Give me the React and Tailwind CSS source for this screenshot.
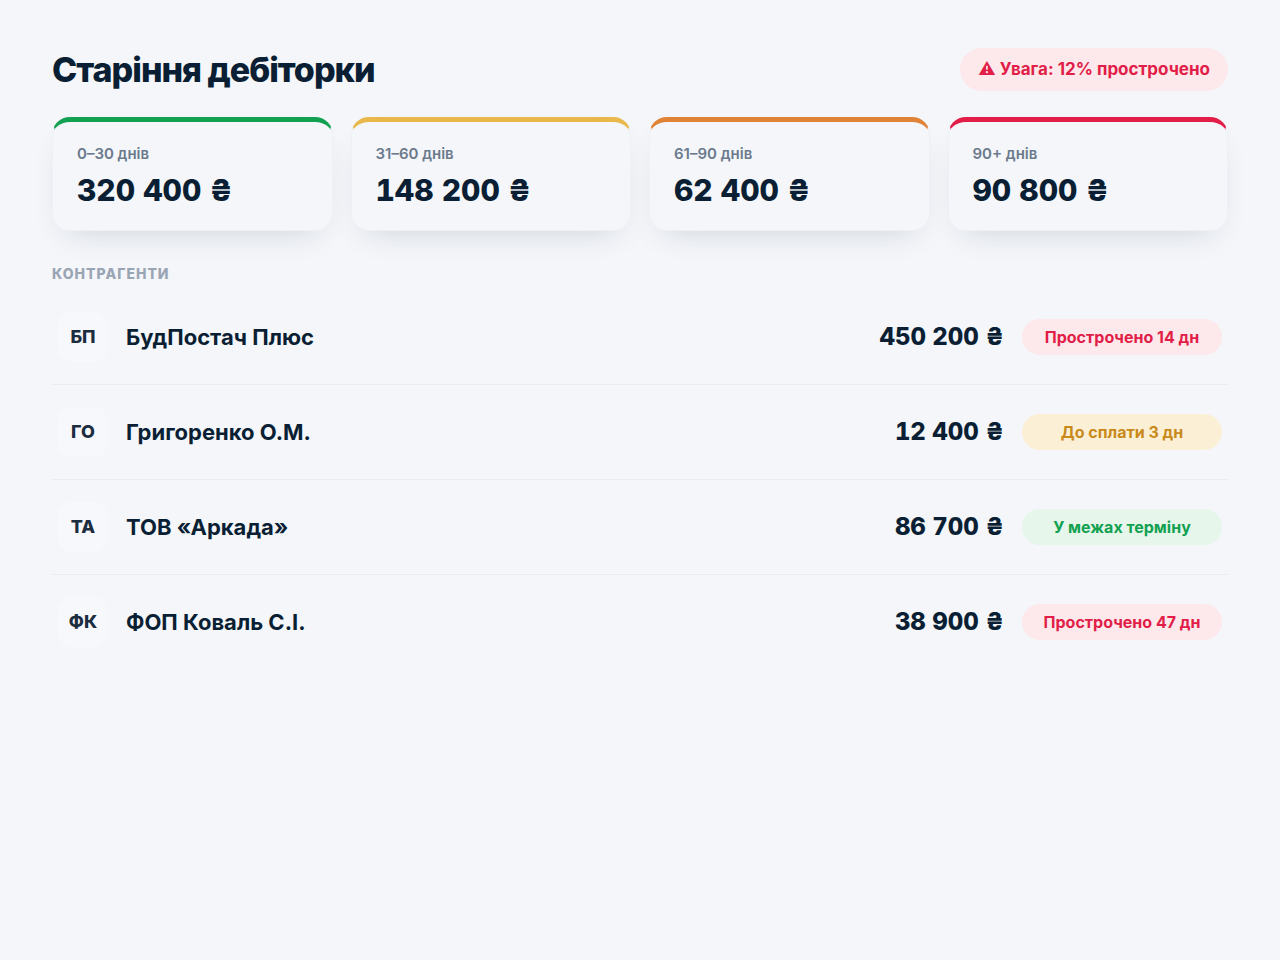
import React from 'react';

const buckets = [
  { label: '0–30 днів', amount: '320 400 ₴', border: 'border-t-[#12a150]' },
  { label: '31–60 днів', amount: '148 200 ₴', border: 'border-t-[#e8b84a]' },
  { label: '61–90 днів', amount: '62 400 ₴', border: 'border-t-[#e08336]' },
  { label: '90+ днів', amount: '90 800 ₴', border: 'border-t-[#e11d48]' },
];

const statusStyles = {
  overdue: 'bg-[#fde8eb] text-[#e11d48]',
  soon: 'bg-[#fbf0d5] text-[#c98a1b]',
  ok: 'bg-[#e6f6eb] text-[#12a150]',
};

const clients = [
  { initials: 'БП', name: 'БудПостач Плюс', amount: '450 200 ₴', status: 'overdue', note: 'Прострочено 14 дн' },
  { initials: 'ГО', name: 'Григоренко О.М.', amount: '12 400 ₴', status: 'soon', note: 'До сплати 3 дн' },
  { initials: 'ТА', name: 'ТОВ «Аркада»', amount: '86 700 ₴', status: 'ok', note: 'У межах терміну' },
  { initials: 'ФК', name: 'ФОП Коваль С.І.', amount: '38 900 ₴', status: 'overdue', note: 'Прострочено 47 дн' },
];

const App = () => {
  return (
    <main className="min-h-screen bg-[#f4f6fa] px-[52px] py-12 font-['Inter',sans-serif] text-[#0a1f33] antialiased">
      {/* Заголовок */}
      <header className="flex items-start justify-between">
        <h1 className="text-[34px] leading-11 font-extrabold tracking-[-1px]">Старіння дебіторки</h1>
        <div className="rounded-full bg-[#fde8eb] px-[18px] py-[11px] text-[17px] leading-[21px] font-bold text-[#e11d48]">
          ⚠ Увага: 12% прострочено
        </div>
      </header>

      {/* Суми за строками */}
      <section className="mt-[25px] grid grid-cols-4 gap-[18px]">
        {buckets.map((bucket) => (
          <div
            key={bucket.label}
            className={`rounded-[18px] border border-t-5 border-[#eef0f4] px-6 pt-[23px] pb-[21px] shadow-[0_14px_32px_-14px_rgba(10,31,51,0.16)] ${bucket.border}`}
          >
            <div className="text-[15px] leading-[18px] font-semibold text-[#6b7a8d]">{bucket.label}</div>
            <div className="mt-2 text-[30px] leading-[38px] font-extrabold tabular-nums">{bucket.amount}</div>
          </div>
        ))}
      </section>

      {/* Контрагенти */}
      <h2 className="mt-[34px] text-sm leading-[17px] font-extrabold tracking-[1px] text-[#9aa5b4] uppercase">Контрагенти</h2>
      <ul className="mt-2 divide-y divide-[#e9ecf1]">
        {clients.map((client) => (
          <li key={client.name} className="flex items-center px-[6px] py-[22px]">
            <div className="flex size-[50px] items-center justify-center rounded-[14px] bg-[#f7f8fc] text-lg leading-6 font-extrabold text-[#1c2d40]">
              {client.initials}
            </div>
            <div className="ml-[18px] flex-1 text-[22px] leading-[26px] font-bold">{client.name}</div>
            <div className="text-2xl font-extrabold tabular-nums">{client.amount}</div>
            <div className={`ml-[18px] w-[200px] rounded-full py-2 text-center text-base leading-5 font-bold ${statusStyles[client.status]}`}>
              {client.note}
            </div>
          </li>
        ))}
      </ul>
    </main>
  );
};

export default App;
